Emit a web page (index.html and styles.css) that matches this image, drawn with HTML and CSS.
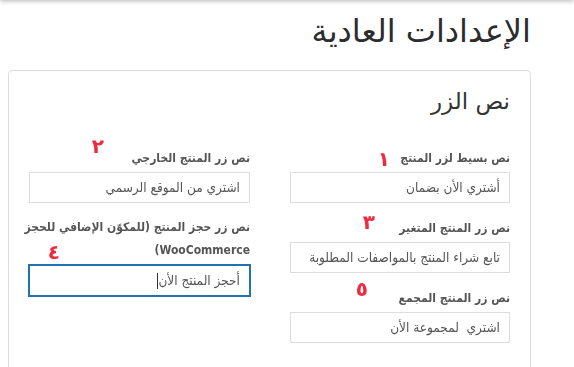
FILE: index.html
```html
<!DOCTYPE html>
<html lang="ar" dir="rtl">
<head>
<meta charset="utf-8">
<link rel="stylesheet" href="styles.css">
</head>
<body>
<div class="topshadow"></div>
<div class="wrap">
  <h1 class="title">الإعدادات العادية</h1>
  <div class="card">
    <h2 class="card-title">نص الزر</h2>
    <div class="cols">
      <div class="col">
        <div class="field">
          <label class="lbl">نص بسيط لزر المنتج</label>
          <div class="inp">أشتري الأن بضمان</div>
          <span class="num n1">١</span>
        </div>
        <div class="field">
          <label class="lbl">نص زر المنتج المتغير</label>
          <div class="inp">تابع شراء المنتج بالمواصفات المطلوبة</div>
          <span class="num n3">٣</span>
        </div>
        <div class="field">
          <label class="lbl">نص زر المنتج المجمع</label>
          <div class="inp">اشتري&nbsp; لمجموعة الأن</div>
          <span class="num n5">٥</span>
        </div>
      </div>
      <div class="col">
        <div class="field f2">
          <label class="lbl">نص زر المنتج الخارجي</label>
          <div class="inp">اشتري من الموقع الرسمي</div>
          <span class="num n2">٢</span>
        </div>
        <div class="field f4">
          <label class="lbl two"><span class="line1">نص زر حجز المنتج (للمكوّن الإضافي للحجز</span> WooCommerce)</label>
          <div class="inp focus">أحجز المنتج الأن<span class="caret"></span></div>
          <span class="num n4">٤</span>
        </div>
      </div>
    </div>
  </div>
</div>
</body>
</html>
```
FILE: styles.css
```css
html, body {
  margin: 0;
  padding: 0;
  background: #fff;
  font-family: "DejaVu Sans", "Noto Sans", sans-serif;
  color: #333;
}
.topshadow {
  position: fixed;
  top: -10px;
  left: 0;
  right: 0;
  height: 10px;
  box-shadow: 0 1px 5px rgba(0,0,0,0.3);
}
.wrap {
  margin: 0 43px 0 8px;
}
.title {
  margin: 0;
  padding-top: 11px;
  font-size: 32px;
  font-weight: normal;
  line-height: 40px;
  color: #2c2c2c;
  height: 59px;
}
.card {
  border: 1px solid #dcdcdc;
  border-radius: 4px;
  padding: 12px 20px 40px 20px;
  height: 400px;
}
.card-title {
  margin: 0;
  font-size: 23px;
  font-weight: normal;
  line-height: 36px;
  color: #333;
  height: 65px;
}
.cols {
  display: flex;
  gap: 40px;
}
.col {
  width: 221px;
  display: flex;
  flex-direction: column;
}
.field {
  position: relative;
  margin-bottom: 15px;
}
.f2 { margin-bottom: 13px; }
.lbl {
  display: block;
  font-family: "DejaVu Sans Condensed", "DejaVu Sans", sans-serif;
  font-size: 12px;
  font-weight: bold;
  color: #555;
  line-height: 20px;
  margin-bottom: 4px;
}
.lbl.two { line-height: 23px; margin-bottom: 2px; }
.line1 { white-space: nowrap; }
.inp {
  box-sizing: border-box;
  height: 31px;
  border: 1px solid #ddd;
  padding: 0 9px;
  font-family: "DejaVu Sans Condensed", "DejaVu Sans", sans-serif;
  font-size: 13.5px;
  line-height: 29px;
  color: #555;
  white-space: nowrap;
  overflow: hidden;
}
.inp.focus {
  border: 2px solid #2271b1;
  height: 33px;
  margin-left: -1px;
  margin-right: -1px;
  line-height: 29px;
  padding: 0 9px;
}
.caret {
  display: inline-block;
  width: 1px;
  height: 16px;
  background: #333;
  vertical-align: middle;
}
.num {
  position: absolute;
  color: #ef2b3d;
  font-weight: bold;
  font-size: 20px;
  line-height: 20px;
}
.n1 { right: 120px; top: 1px; }
.n3 { right: 135px; top: -6px; }
.n5 { right: 142px; top: -9px; }
.n2 { right: 146px; top: -12px; }
.n4 { right: 190px; top: 26px; }
```
